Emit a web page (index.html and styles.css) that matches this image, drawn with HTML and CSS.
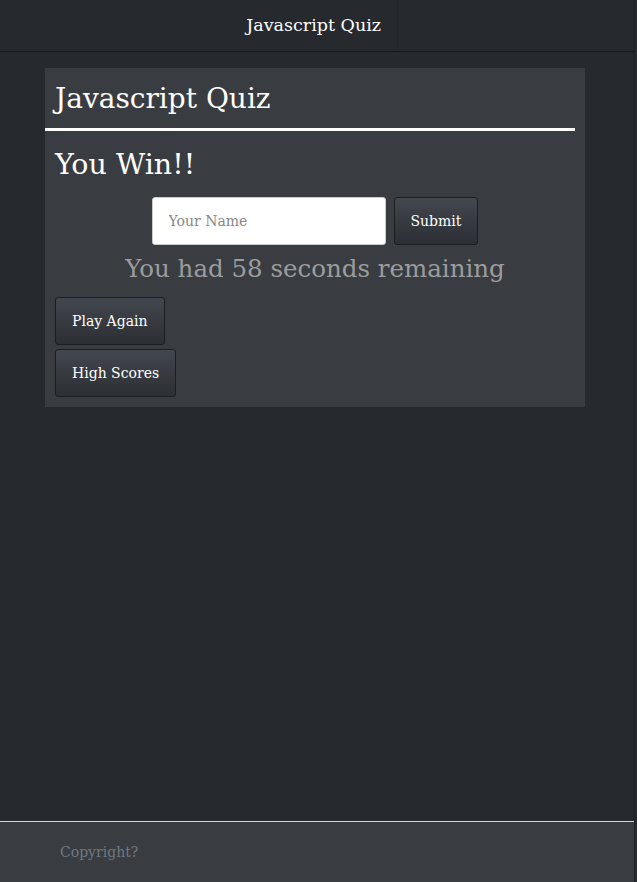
FILE: index.html
```html
<!DOCTYPE html>
<html>
<head>
<meta charset="utf-8">
<link rel="stylesheet" href="styles.css">
</head>
<body>
<div class="page">
  <header class="topbar">
    <div class="topbar-left"><span class="brand">Javascript Quiz</span></div>
    <div class="topbar-right"></div>
  </header>
  <main class="main">
    <section class="card">
      <h1 class="card-title">Javascript Quiz</h1>
      <hr class="rule">
      <h2 class="result">You Win!!</h2>
      <form class="score-form">
        <input class="name-input" type="text" placeholder="Your Name">
        <button class="btn" type="button">Submit</button>
      </form>
      <p class="remaining">You had 58 seconds remaining</p>
      <div class="actions">
        <button class="btn btn-lg" type="button">Play Again</button>
        <button class="btn btn-lg" type="button">High Scores</button>
      </div>
    </section>
  </main>
  <footer class="footer">
    <span class="copy">Copyright?</span>
  </footer>
</div>
</body>
</html>
```
FILE: styles.css
```css
html, body {
  margin: 0;
  padding: 0;
  height: 100%;
}
body {
  background: #26292e;
  font-family: "DejaVu Serif", "Liberation Serif", serif;
  color: #fff;
}
.page {
  width: 635px;
  height: 882px;
  display: flex;
  flex-direction: column;
  border-right: 1px solid #1f2226;
  box-sizing: border-box;
}
.topbar {
  height: 52px;
  display: flex;
  border-bottom: 1px solid #16181b;
  box-sizing: border-box;
  background: #26292e;
}
.topbar-left {
  width: 398px;
  border-right: 1px solid #222529;
  display: flex;
  justify-content: flex-end;
  align-items: center;
  padding-right: 16px;
  box-sizing: border-box;
}
.brand {
  font-size: 17.5px;
  color: #fff;
  padding-bottom: 2px;
}
.topbar-right { flex: 1; }
.main {
  flex: 1;
  padding: 16px 50px 0 45px;
}
.card {
  background: #393d42;
  width: 540px;
  padding: 10px 10px 10px 10px;
  box-sizing: border-box;
}
.card-title {
  margin: 0;
  font-size: 28px;
  font-weight: normal;
  line-height: 40px;
  padding-top: 1px;
}
.rule {
  margin: 9px 0 0 -10px;
  width: 530px;
  border: 0;
  height: 3px;
  background: #fff;
}
.result {
  margin: 14px 0 0 0;
  font-size: 28.5px;
  font-weight: normal;
  line-height: 40px;
}
.score-form {
  display: flex;
  justify-content: center;
  gap: 8px;
  margin-top: 12px;
}
.name-input {
  width: 234px;
  height: 48px;
  box-sizing: border-box;
  border: 1px solid #ccc;
  border-radius: 3px;
  padding: 0 16px;
  font-family: inherit;
  font-size: 14px;
  color: #333;
  background: #fff;
  outline: none;
}
.name-input::placeholder { color: #888; }
.btn {
  height: 48px;
  padding: 0 16px;
  font-family: inherit;
  font-size: 14px;
  color: #fff;
  background: linear-gradient(#43474e, #2c2f34);
  border: 1px solid #1c1e21;
  border-radius: 3px;
  box-sizing: border-box;
}
.remaining {
  margin: 8px 0 0 0;
  text-align: center;
  font-size: 24.5px;
  line-height: 32px;
  color: #9c9c9c;
}
.actions {
  display: flex;
  flex-direction: column;
  align-items: flex-start;
  gap: 4px;
  margin-top: 12px;
}
.footer {
  height: 61px;
  background: #393d42;
  border-top: 1px solid #d8d8d8;
  display: flex;
  align-items: center;
  padding-left: 60px;
  box-sizing: border-box;
}
.copy {
  font-size: 14px;
  color: #707880;
}
```
